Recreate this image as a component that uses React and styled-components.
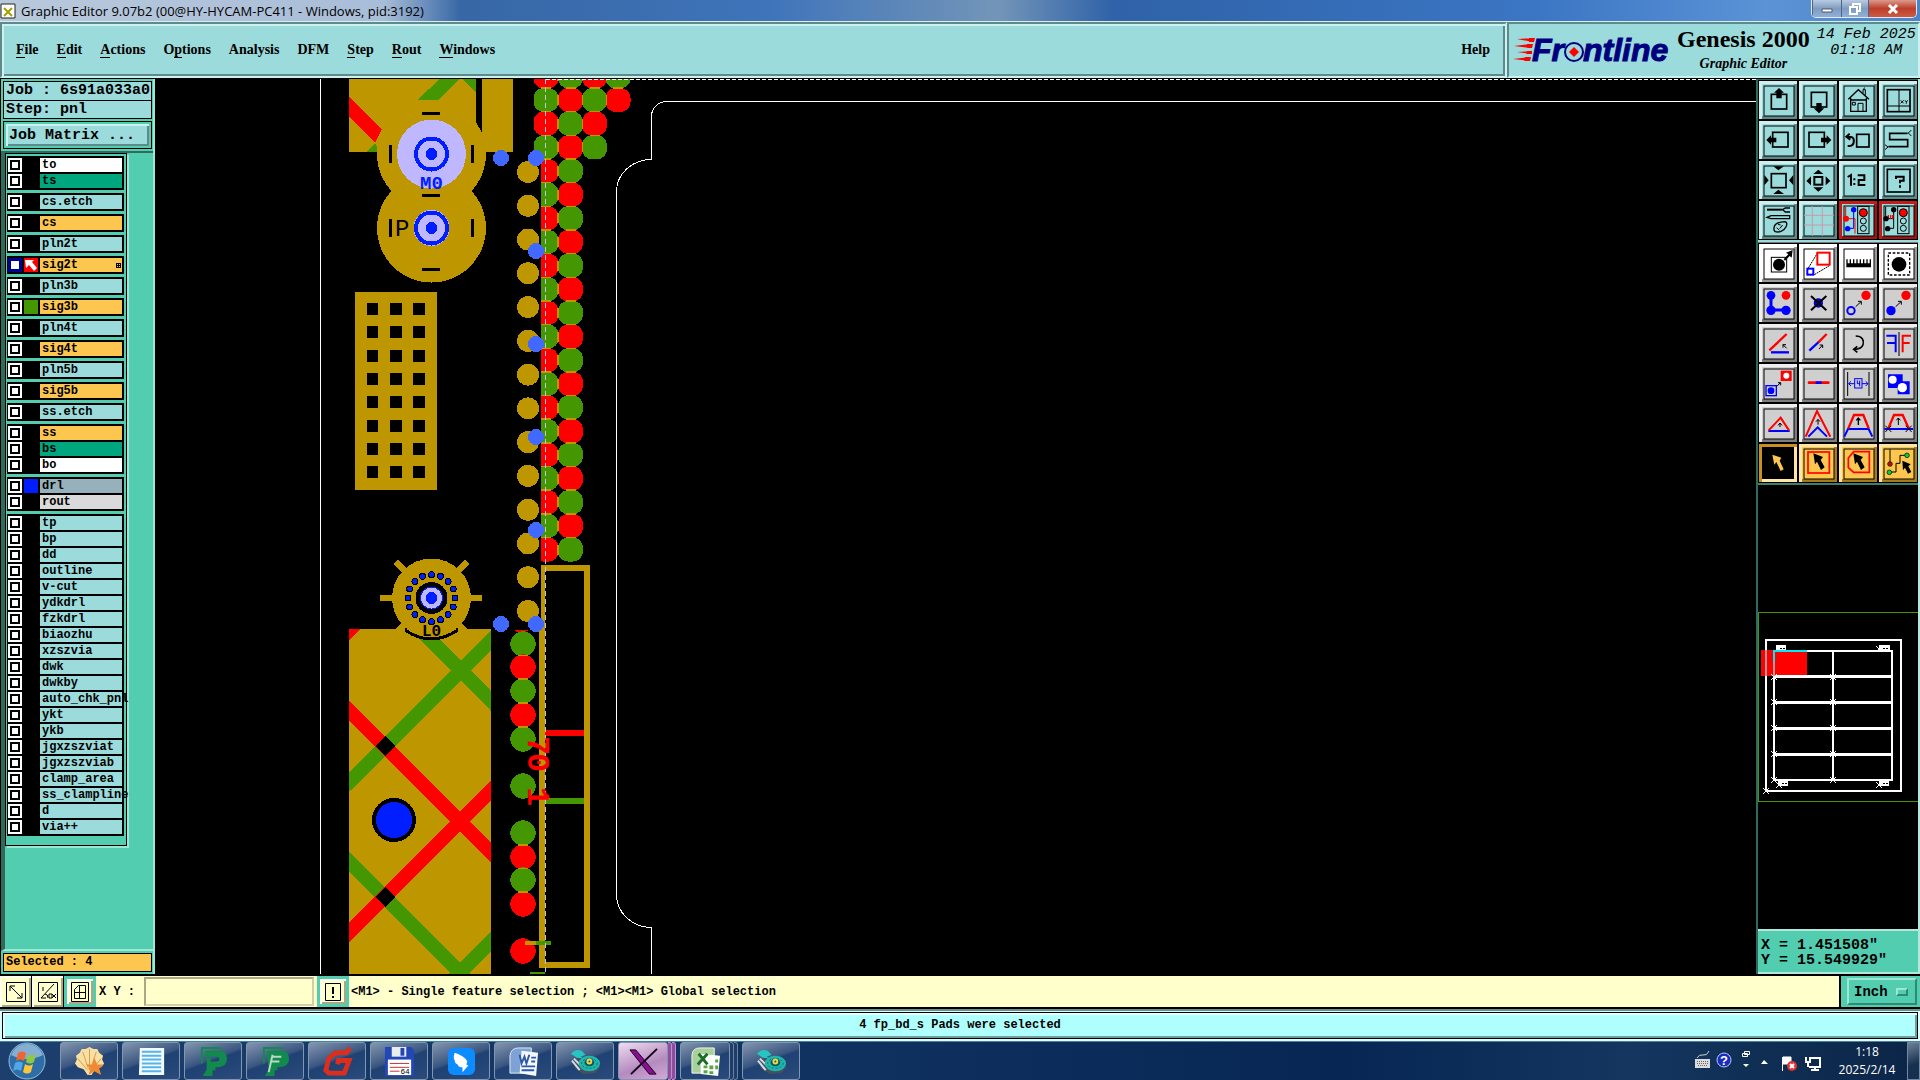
import React, { useState } from "react";
import styled, { createGlobalStyle } from "styled-components";

const GOLD = "#be9700";
const GREEN = "#449700";
const RED = "#ff0000";
const BLUE = "#001eff";
const PIN = "#4169ff";
const LILAC = "#bfb7ff";

const layerGroups = [
  [{ name: "to", color: "#ffffff" }, { name: "ts", color: "#00a77e" }],
  [{ name: "cs.etch" }],
  [{ name: "cs", color: "#fdc64f" }],
  [{ name: "pln2t" }],
  [{ name: "sig2t", color: "#fdc64f", swatch: RED, active: true }],
  [{ name: "pln3b" }],
  [{ name: "sig3b", color: "#fdc64f", swatch: GREEN }],
  [{ name: "pln4t" }],
  [{ name: "sig4t", color: "#fdc64f" }],
  [{ name: "pln5b" }],
  [{ name: "sig5b", color: "#fdc64f" }],
  [{ name: "ss.etch" }],
  [
    { name: "ss", color: "#fdc64f" },
    { name: "bs", color: "#00a77e" },
    { name: "bo", color: "#ffffff" },
  ],
  [
    { name: "drl", color: "#96b1bb", swatch: BLUE },
    { name: "rout", color: "#dadada" },
  ],
  [
    "tp",
    "bp",
    "dd",
    "outline",
    "v-cut",
    "ydkdrl",
    "fzkdrl",
    "biaozhu",
    "xzszvia",
    "dwk",
    "dwkby",
    "auto_chk_pnl",
    "ykt",
    "ykb",
    "jgxzszviat",
    "jgxzszviab",
    "clamp_area",
    "ss_clampline",
    "d",
    "via++",
  ].map((name) => ({ name })),
];

// before / underlined letter / after
const menus = [
  ["", "F", "ile"],
  ["", "E", "dit"],
  ["", "A", "ctions"],
  ["O", "p", "tions"],
  ["Analysis", "", ""],
  ["DFM", "", ""],
  ["", "S", "tep"],
  ["", "R", "out"],
  ["", "W", "indows"],
];

/* Tool icons, drawn on a 114 x 114 grid */

const viewTools = [
  {
    label: "Pan up",
    art: (
      <>
        <rect x="37" y="40" width="46" height="44" fill="none" stroke="#000" strokeWidth="5" />
        <path d="M60 21l15 14h-7v17H52V35h-7z" />
      </>
    ),
  },
  {
    label: "Pan down",
    art: (
      <>
        <rect x="37" y="34" width="46" height="44" fill="none" stroke="#000" strokeWidth="5" />
        <path d="M60 97l16-15h-8V66H52v16h-8z" />
      </>
    ),
  },
  {
    label: "Home",
    art: (
      <g fill="none" stroke="#000" strokeWidth="4">
        <path d="M28 55l30-29 32 29M35 51v40h47V51M34 57h49" />
        <path d="M57 91V67h15v24M40 64h9v8h-9zM72 36V26h7v17M73 24l5-4" strokeWidth="3" />
      </g>
    ),
  },
  {
    label: "Zoom at XY",
    art: (
      <>
        <rect x="25" y="26" width="68" height="66" fill="none" stroke="#000" strokeWidth="5" />
        <path d="M60 26v66M25 75h68" stroke="#000" strokeWidth="3" />
        <path d="M65 58l9 9m0-9l-9 9M78 58l4 5 4-5m-4 5v5" fill="none" stroke="#000" strokeWidth="3" />
      </>
    ),
  },
  {
    label: "Pan left",
    art: (
      <>
        <rect x="41" y="34" width="46" height="44" fill="none" stroke="#000" strokeWidth="5" />
        <path d="M22 57l14-14v7h16v14H36v7z" />
      </>
    ),
  },
  {
    label: "Pan right",
    art: (
      <>
        <rect x="30" y="34" width="46" height="44" fill="none" stroke="#000" strokeWidth="5" />
        <path d="M97 57L83 43v7H66v14h17v7z" />
      </>
    ),
  },
  {
    label: "Previous view",
    art: (
      <g fill="none" stroke="#000" strokeWidth="5">
        <rect x="53" y="40" width="37" height="38" />
        <path d="M26 48h10c12 0 12 26-4 27h-6M32 38l-10 9 12 9" strokeWidth="6" />
      </g>
    ),
  },
  {
    label: "Snake view",
    art: (
      <g fill="none" stroke="#000" strokeWidth="5">
        <path d="M86 37H32v19h54v21H28" />
        <path d="M97 27l-9 9 9 9M18 71l9 7-9 8" strokeWidth="3" />
      </g>
    ),
  },
  {
    label: "Zoom in",
    art: (
      <>
        <rect x="37" y="38" width="44" height="42" fill="none" stroke="#000" strokeWidth="5" />
        <path d="M43 16h32L58 28zM43 99h32L58 86zM16 42v31l13-15zM103 42v31L90 58z" />
      </>
    ),
  },
  {
    label: "Zoom out",
    art: (
      <>
        <rect x="46" y="48" width="24" height="23" fill="none" stroke="#000" strokeWidth="6" />
        <path d="M58 26l15 13H43zM58 92l15-13H43zM22 60l14-14v27zM94 60L80 46v27z" />
      </>
    ),
  },
  {
    label: "One to two",
    art: (
      <g fill="none" stroke="#000" strokeWidth="6">
        <path d="M26 48l10-6v32M46 52v6M46 66v6M56 43h20v14H59v15h20" />
      </g>
    ),
  },
  {
    label: "Query",
    art: (
      <>
        <rect x="25" y="25" width="68" height="68" fill="none" stroke="#000" strokeWidth="5" />
        <path d="M51 54v-7h23v12H63v8M63 73v7" fill="none" stroke="#000" strokeWidth="6" />
      </>
    ),
  },
  {
    label: "Options",
    art: (
      <g fill="none" stroke="#000" strokeWidth="4">
        <path d="M24 26h46" strokeWidth="6" />
        <path d="M93 21H79l-8 5 8 7h14M24 49l12-5h56v9H36z" />
        <path d="M45 82c0-14 12-19 32-20 9 0 7 12 3 17-5 12-22 16-31 13-3-2-5-6-4-10z" />
        <path d="M57 70l8 2M53 80l8 8M71 72l-9 11" strokeWidth="3" />
      </g>
    ),
  },
  {
    label: "Grid",
    art: (
      <path d="M40 15v90M70 15v90M15 43h90M15 72h90" stroke="#c99aa8" strokeWidth="3" fill="none" />
    ),
  },
  {
    label: "Affected layers",
    alert: true,
    art: (
      <>
        <rect x="56" y="16" width="34" height="82" fill="none" stroke="#000" strokeWidth="3" />
        <circle cx="73" cy="35" r="12" fill={RED} stroke="#000" strokeWidth="3" />
        <path d="M20 17v36h28v45" fill="none" stroke={RED} strokeWidth="3" />
        <path d="M44 26v56H26" fill="none" stroke="#0000ff" strokeWidth="3" />
        <circle cx="21" cy="53" r="9" fill={RED} />
        <circle cx="44" cy="26" r="8" fill="#0000ff" />
        <circle cx="26" cy="83" r="8" fill="#0000ff" />
        <circle cx="73" cy="60" r="9" fill="none" stroke="#000" strokeWidth="3" />
        <circle cx="73" cy="82" r="9" fill="none" stroke="#000" strokeWidth="3" />
      </>
    ),
  },
  {
    label: "Layer conflicts",
    alert: true,
    art: (
      <>
        <rect x="56" y="16" width="34" height="82" fill="none" stroke="#000" strokeWidth="3" />
        <circle cx="73" cy="35" r="12" fill={RED} stroke="#000" strokeWidth="3" />
        <path d="M20 17v36M44 26v56H26M20 53h24" fill="none" stroke="#000" strokeWidth="3" />
        <path d="M28 53V42M35 53V42M41 53V42" stroke={RED} strokeWidth="4" />
        <circle cx="21" cy="53" r="8" />
        <circle cx="44" cy="26" r="8" />
        <circle cx="26" cy="83" r="8" />
        <circle cx="73" cy="60" r="9" fill="none" stroke="#000" strokeWidth="3" />
        <circle cx="73" cy="82" r="9" fill="none" stroke="#000" strokeWidth="3" />
      </>
    ),
  },
];

const editTools = [
  {
    label: "Add feature",
    tone: "white",
    art: (
      <>
        <rect x="37" y="40" width="46" height="44" fill="none" stroke="#000" strokeWidth="3" />
        <circle cx="60" cy="62" r="18" />
        <path d="M74 46l14-15-7-5 20-8-3 23-6-5-14 14z" />
      </>
    ),
  },
  {
    label: "Resize",
    tone: "white",
    art: (
      <>
        <path d="M28 72l28-46M46 92l45-27" stroke="#000" strokeWidth="3" strokeDasharray="6 2" />
        <rect x="55" y="26" width="37" height="36" fill="#fff" stroke={RED} strokeWidth="6" />
        <rect x="25" y="74" width="18" height="18" fill="#fff" stroke="#0000ff" strokeWidth="6" />
      </>
    ),
  },
  {
    label: "Measure",
    tone: "white",
    art: (
      <path d="M22 46h4v12h6V46h4v12h6V46h4v12h6V46h4v12h6V46h4v12h6V46h4v12h6V46h4v12h6V46h4v24H22z" />
    ),
  },
  {
    label: "Select surround",
    tone: "white",
    art: (
      <>
        <rect x="28" y="27" width="64" height="66" fill="none" stroke="#000" strokeWidth="4" strokeDasharray="8 5" />
        <circle cx="60" cy="61" r="22" />
      </>
    ),
  },
  {
    label: "Connect pads",
    art: (
      <>
        <path d="M36 34v44h44" fill="none" stroke="#0000ff" strokeWidth="9" />
        <circle cx="36" cy="34" r="13" fill="#0000ff" />
        <circle cx="36" cy="79" r="14" fill="#0000ff" />
        <circle cx="81" cy="79" r="14" fill="#0000ff" />
        <circle cx="81" cy="34" r="13" fill={RED} />
      </>
    ),
  },
  {
    label: "Delete",
    art: (
      <>
        <circle cx="58" cy="57" r="14" fill="#0000c8" />
        <path d="M36 36l46 43M82 36L36 79" stroke="#000" strokeWidth="6" />
      </>
    ),
  },
  {
    label: "Copy",
    art: (
      <>
        <circle cx="36" cy="80" r="11" fill="none" stroke="#0000ff" strokeWidth="6" />
        <circle cx="81" cy="34" r="14" fill={RED} />
        <path d="M50 68l16-15M57 52h10v10" fill="none" stroke="#000" strokeWidth="3" />
      </>
    ),
  },
  {
    label: "Move",
    art: (
      <>
        <circle cx="36" cy="80" r="14" fill="#0000ff" />
        <circle cx="81" cy="34" r="14" fill={RED} />
        <path d="M50 68l16-15M57 52h10v10" fill="none" stroke="#000" strokeWidth="3" />
      </>
    ),
  },
  {
    label: "Rotate line",
    art: (
      <>
        <path d="M36 85h54" stroke="#0000ff" strokeWidth="7" />
        <path d="M31 79l52-49" stroke={RED} strokeWidth="7" />
        <path d="M83 73L72 62M72 71v-9h9" fill="none" stroke="#000" strokeWidth="3" />
      </>
    ),
  },
  {
    label: "Stretch line",
    art: (
      <>
        <path d="M31 80l28-26" stroke="#0000ff" strokeWidth="7" />
        <path d="M58 55l25-25" stroke={RED} strokeWidth="7" />
        <path d="M60 75l11-12M62 63h9v9" fill="none" stroke="#000" strokeWidth="3" />
      </>
    ),
  },
  {
    label: "Rotate",
    art: (
      <path d="M50 36c20 0 26 14 22 26-3 9-10 13-26 14M55 67l-11 9 11 9" fill="none" stroke="#000" strokeWidth="5" />
    ),
  },
  {
    label: "Mirror",
    art: (
      <>
        <path d="M22 35h28v50M24 57h26" fill="none" stroke="#0000ff" strokeWidth="6" />
        <path d="M60 24v72" stroke="#000" strokeWidth="3" />
        <path d="M96 35H71v50M71 57h21" fill="none" stroke={RED} strokeWidth="6" />
      </>
    ),
  },
  {
    label: "Replace symbol",
    art: (
      <>
        <rect x="21" y="65" width="31" height="30" fill="none" stroke="#0000ff" strokeWidth="4" />
        <circle cx="36" cy="80" r="10" fill="#0000ff" />
        <rect x="65" y="20" width="33" height="31" fill={RED} />
        <circle cx="82" cy="35" r="9" fill="#fff" />
        <path d="M54 67l10-11M57 56h8v8" fill="none" stroke="#000" strokeWidth="3" />
      </>
    ),
  },
  {
    label: "Join lines",
    art: (
      <>
        <path d="M30 56h58" stroke={RED} strokeWidth="8" strokeLinecap="round" />
        <path d="M50 56h18" stroke="#0000ff" strokeWidth="8" />
      </>
    ),
  },
  {
    label: "Spacing",
    art: (
      <>
        <path d="M26 24v72M90 24v72" stroke="#000" strokeWidth="3" />
        <path d="M29 59h58M36 52l-7 7 7 7M80 52l7 7-7 7" fill="none" stroke="#0000ff" strokeWidth="3" />
        <rect x="47" y="44" width="22" height="28" fill="#cfcfcf" stroke="#0000ff" strokeWidth="3" />
        <path d="M55 49v10h8M62 50v17" fill="none" stroke="#0000ff" strokeWidth="3" />
      </>
    ),
  },
  {
    label: "Merge",
    art: (
      <>
        <path d="M27 31h44v21h21v39H56V72H27z" fill="#0000ff" />
        <circle cx="41" cy="47" r="12" fill="#fff" />
        <circle cx="70" cy="71" r="14" fill="#fff" />
      </>
    ),
  },
  {
    label: "Raise corner",
    art: (
      <>
        <path d="M28 81h64" stroke="#0000ff" strokeWidth="6" />
        <path d="M29 79l36-38 25 38" fill="none" stroke={RED} strokeWidth="6" />
        <path d="M63 69V58M57 64l6-7 6 7" fill="none" stroke="#000" strokeWidth="3" />
      </>
    ),
  },
  {
    label: "Raise peak",
    art: (
      <>
        <path d="M20 98l34-77 40 77" fill="none" stroke={RED} strokeWidth="6" />
        <path d="M28 98l28-28 28 28" fill="none" stroke="#0000ff" strokeWidth="6" />
        <path d="M57 62V47M51 53l6-7 6 7" fill="none" stroke="#000" strokeWidth="3" />
      </>
    ),
  },
  {
    label: "Raise segment",
    art: (
      <>
        <path d="M16 98l11-23h62l11 23" fill="none" stroke="#0000ff" strokeWidth="6" />
        <path d="M28 73l17-40h28l16 40" fill="none" stroke={RED} strokeWidth="7" />
        <path d="M58 63V42M52 49l6-7 6 7" fill="none" stroke="#000" strokeWidth="4" />
      </>
    ),
  },
  {
    label: "Move segment",
    art: (
      <>
        <path d="M16 75h86" stroke="#0000ff" strokeWidth="6" />
        <path d="M28 73l17-40h26l18 40" fill="none" stroke={RED} strokeWidth="7" />
        <path d="M58 63V42M52 49l6-7 6 7M19 65l18 19m0-19L19 84M80 65l18 19m0-19L80 84" fill="none" stroke="#000" strokeWidth="3" />
      </>
    ),
  },
  {
    label: "Select",
    tone: "pressed",
    art: <path d="M40 32l27 9-5 9 12 26-9 5-13-27-6 8z" fill="#fdc64f" />,
  },
  {
    label: "Select in frame",
    tone: "orange",
    art: (
      <>
        <rect x="27" y="24" width="64" height="63" fill="none" stroke={RED} strokeWidth="5" />
        <path d="M43 28l29 11-7 9 12 22-11 8-12-25-6 8z" />
      </>
    ),
  },
  {
    label: "Select in polygon",
    tone: "orange",
    art: (
      <>
        <path d="M44 23h47v62H44L28 71V42z" fill="none" stroke={RED} strokeWidth="5" />
        <path d="M43 28l29 11-7 9 12 22-11 8-12-25-6 8z" />
      </>
    ),
  },
  {
    label: "Select net",
    tone: "orange",
    art: (
      <>
        <path d="M33 16v40M33 84h18V58h12V34h18" fill="none" stroke="#000" strokeWidth="3" />
        <circle cx="33" cy="60" r="7" fill="#c41200" stroke="#000" strokeWidth="2" />
        <circle cx="31" cy="85" r="7" fill="#00d42a" stroke="#000" strokeWidth="2" />
        <circle cx="84" cy="34" r="7" fill="#00d42a" stroke="#000" strokeWidth="2" />
        <path d="M70 50l25 11-7 6 9 17-10 5-9-18-6 8z" />
      </>
    ),
  },
];

const ToolGlyph = ({ art, frameless }) => (
  <svg width="38" height="38" viewBox="0 0 114 114" aria-hidden="true">
    {!frameless && (
      <rect x="15" y="15" width="90" height="90" fill="none" stroke="#000" strokeWidth="3" />
    )}
    {art}
  </svg>
);

/* Board artwork */

const ballPitch = 23.66;
const ballColumns = [546, 570.5, 594.5, 618];

const balls = [];
for (let row = -1; row < 20; row++) {
  const columns = row < 1 ? 4 : row < 3 ? 3 : 2;
  for (let col = 0; col < columns; col++) {
    balls.push({
      x: ballColumns[col],
      y: 100 + row * ballPitch,
      row,
      col,
      last: col === columns - 1,
      fill: (row + col + 2) % 2 === 0 ? GREEN : RED,
    });
  }
}

const lowerBalls = [
  [644, GREEN],
  [667, RED],
  [691, GREEN],
  [715, RED],
  [739, GREEN],
  [786, GREEN],
  [833, GREEN],
  [857, RED],
  [880, GREEN],
  [904, RED],
  [951, RED],
];

const goldPads = Array.from({ length: 14 }, (_, i) => 172 + i * 33.77);
const holeRows = Array.from({ length: 8 }, (_, i) => 303 + i * 23.3);
const pins = [
  [501, 158],
  [536, 158],
  [536, 251],
  [536, 344],
  [536, 437],
  [536, 530],
  [536, 624],
  [501, 624],
];
const viaRing = Array.from({ length: 16 }, (_, i) => (i * Math.PI) / 8);

const Board = () => (
  <svg width="100%" height="100%" aria-label="Board artwork">
    <defs>
      <clipPath id="padBlock">
        <rect x="349" y="629" width="142" height="345" />
      </clipPath>
      <clipPath id="ballStrip">
        <path d="M530 79h120v490H541V159h-11z" />
      </clipPath>
    </defs>
    <g transform="translate(-155 -79)" shapeRendering="crispEdges">
      <path d="M320.5 79V974" stroke="#fff" />

      {/* top blocks */}
      <path d="M349 79h127v73H349zM482 79h31v73h-31z" fill={GOLD} />
      <path d="M349 97l33 32-7 14-26-26z" fill={RED} />
      <path d="M440 79h19l-21 21h-21zM463 79h13v14zM367 152l8-9 4 9z" fill={GREEN} />
      <circle cx="431.5" cy="154" r="54.5" fill={GOLD} />
      <circle cx="431.5" cy="228" r="54.5" fill={GOLD} />
      <circle cx="431.5" cy="154" r="34.5" fill={LILAC} />
      <circle cx="431.5" cy="154" r="15.5" fill="none" stroke={BLUE} strokeWidth="4" />
      <circle cx="431.5" cy="154" r="6" fill={BLUE} />
      <circle cx="431.5" cy="228" r="18" fill={LILAC} />
      <circle cx="431.5" cy="228" r="15.5" fill="none" stroke={BLUE} strokeWidth="4" />
      <circle cx="431.5" cy="228" r="6" fill={BLUE} />
      <path
        d="M422 113.5h18M422 195.5h18M422 269.5h18M390.5 145v18M472.5 145v18M390.5 219v18M472.5 219v18"
        stroke="#000"
        strokeWidth="3"
      />

      {/* hole grid */}
      <rect x="355" y="292" width="82" height="198" fill={GOLD} />
      {holeRows.map((y) => (
        <path key={y} d={`M367 ${y}h11v12h-11zM390 ${y}h12v12h-12zM413 ${y}h12v12h-12z`} />
      ))}

      {/* pad block with traces */}
      <rect x="349" y="629" width="142" height="345" fill={GOLD} />
      <g clipPath="url(#padBlock)">
        <path d="M349 772L491 630v21L349 792zM410 629h20l61 62v20zM349 851l122 123h-20L349 871zM491 931v20l-23 23h-20z" fill={GREEN} />
        <path d="M349 629h12l-12 11zM349 701l142 141v20L349 721zM349 922l142-142v20L349 942z" fill={RED} />
        <path d="M385 736l10 10-10 10-10-10zM385 887l10 10-10 10-10-10z" />
      </g>
      <circle cx="394" cy="820" r="22" />
      <circle cx="394" cy="820" r="18" fill={BLUE} />

      {/* wheel target */}
      <path d="M380 598h102M396 562l71 71M467 562l-71 71" stroke={GOLD} strokeWidth="6" />
      <circle cx="431.5" cy="598" r="39.5" fill={GOLD} />
      <circle cx="431.5" cy="598" r="16" />
      <circle cx="431.5" cy="598" r="11" fill={LILAC} stroke={BLUE} />
      <circle cx="431.5" cy="598" r="6" fill={BLUE} />
      {viaRing.map((a) => (
        <circle
          key={a}
          cx={431.5 + 23.5 * Math.cos(a)}
          cy={598 + 23.5 * Math.sin(a)}
          r="3"
          fill={BLUE}
          stroke="#000"
        />
      ))}
      <path d="M405 630q26 18 53 0" fill="none" stroke="#000" strokeWidth="3" />

      {/* pads and ball columns */}
      {goldPads.map((y) => (
        <circle key={y} cx="528" cy={y} r="11" fill={GOLD} />
      ))}
      <g clipPath="url(#ballStrip)">
        {balls.map((b) => (
          <rect
            key={`${b.row}-${b.col}`}
            x={b.x - 12.5}
            y={b.y - 12}
            width="25"
            height="24"
            rx="10"
            fill={b.fill}
          />
        ))}
        {balls.map((b) => (
          <path
            key={`${b.row}-${b.col}`}
            d={
              `M${b.x - 5} ${b.y - 12}h10` +
              (b.last ? "" : `M${b.x + 12} ${b.y - 5}v10`)
            }
            stroke={GOLD}
            strokeWidth="1.5"
          />
        ))}
      </g>
      <path d="M514 630h15l-4 2h-9z" fill={RED} />
      {lowerBalls.map(([y, fill]) => (
        <circle key={y} cx="523" cy={y} r="12.7" fill={fill} />
      ))}
      <path
        d="M518 655.5h10M518 679h10M518 703h10M518 727h10M518 845h10M518 868.5h10M518 892h10"
        stroke={GOLD}
        strokeWidth="1.5"
      />

      {/* coupon frame */}
      <path d="M541 565h49v403h-51V628h2zM545 571v391h39V571z" fill={GOLD} fillRule="evenodd" />
      <rect x="545" y="730" width="39" height="6" fill={RED} />
      <rect x="545" y="798" width="39" height="6" fill={GREEN} />
      <path d="M525 941h26v4h-26zM530 972h15v2h-15z" fill={GREEN} />
      <path d="M525 941h11v4h-11z" fill={GOLD} />

      {pins.map(([x, y]) => (
        <circle key={`${x}-${y}`} cx={x} cy={y} r="8" fill={PIN} />
      ))}

      <path d="M545.5 79V974" stroke="#c4c4e8" strokeDasharray="5 3" />
      <path d="M546 79.5H4000" stroke="#fff" strokeDasharray="4 2" />
      <path
        d="M4000 101.5H667A15 15 0 0 0 651.5 116V159.5A35 32 0 0 0 616.5 190V894A35 33 0 0 0 651.5 927.5V974"
        fill="none"
        stroke="#fff"
      />
    </g>
    <BoardText transform="translate(-155 -79)">
      <text x="420" y="189" fontSize="19" fill={BLUE}>M0</text>
      <text x="395" y="236" fontSize="24" fontWeight="normal">P</text>
      <text x="422" y="636" fontSize="16">L0</text>
      <g fill={RED} fontSize="32">
        <text transform="translate(528 736) rotate(90)">7</text>
        <text transform="translate(528 753) rotate(90)">0</text>
        <text transform="translate(528 787) rotate(90)">1</text>
      </g>
    </BoardText>
  </svg>
);

const cross = (x, y) => `M${x - 3} ${y - 3}l6 6M${x + 3} ${y - 3}l-6 6`;

const Overview = () => (
  <svg width="160" height="440" aria-label="Panel overview">
    <g transform="translate(-1758 -487)" fill="none" stroke="#fff" shapeRendering="crispEdges">
      <path d="M1918 614.5H1758.5V803.5H1918" stroke={GREEN} />
      <path d="M1766 642h135v151h-135z" strokeWidth="2" />
      <path d="M1761 652h46v26h-46z" fill={RED} stroke="none" />
      <path d="M1766 652v26M1774 652v26" stroke="#b09a9a" strokeWidth="2" />
      <path d="M1774 678v104h118V653h-85M1833 653v129" strokeWidth="2" />
      <path d="M1775 678.5h117M1775 704.5h117M1775 730.5h117M1775 756.5h117" strokeWidth="3" />
      <path d="M1774 664v-11h33" stroke="#00eaff" strokeWidth="2" />
      <path d="M1776 649h10M1879 649h11M1778 785h10M1879 785h10" strokeWidth="5" />
      <path d="M1780 650h5M1883 650h5M1782 785h6M1883 785h6" stroke="#000" strokeDasharray="2 1" />
      <path
        d={
          [679, 704, 730, 756, 782].map((y) => cross(1774, y) + cross(1833, y)).join("") +
          cross(1766, 793) +
          cross(1779, 787) +
          cross(1879, 787) +
          cross(1879, 651)
        }
      />
    </g>
  </svg>
);

const FrontlineLogo = () => (
  <svg width="162" height="46" viewBox="0 0 162 46" aria-label="Frontline">
    <path
      transform="translate(-1 9)"
      d="M5 3l16-1v4zM2 10l17-2v4zM5 16l15-1v3zM1 23l17-2v4zM17 2h6l-1 4h-5zM15 8h6l-1 4h-5zM15 15h5l-1 3h-5zM13 21h6l-1 4h-6z"
      fill={RED}
    />
    <LogoText x="19" y="34">
      Fr
    </LogoText>
    <circle cx="61" cy="25" r="9" fill="none" stroke="#00007f" strokeWidth="2" />
    <path d="M61 20l5 5-5 5-5-5z" fill={RED} />
    <LogoText x="70" y="34">
      ntline
    </LogoText>
  </svg>
);

/* Taskbar icons, 32 x 32 */

const Genesis = (
  <>
    <path d="M2 15l7-3 20 3 2 7-5 6-12 1-9-6z" fill="#46505f" />
    <path d="M2 15l8 10M4 13l8 8" stroke="#d5dde6" strokeWidth="2" />
    <ellipse cx="20" cy="18" rx="11" ry="8" fill="#1fb5ac" />
    <ellipse cx="20" cy="18" rx="8" ry="5" fill="none" stroke="#0b6e70" strokeDasharray="2 2" />
    <ellipse cx="20" cy="17" rx="5" ry="4" fill="#0b5a5c" />
    <circle cx="20" cy="16" r="3" fill="#f4d747" />
    <circle cx="20" cy="16" r="1" fill="#0b5a5c" />
    <path d="M1 8q5-6 11-3l4 4-5 2 3 2-7-1z" fill="#27c4c4" />
  </>
);

const tasks = [
  {
    label: "Shell",
    art: (
      <>
        <path d="M16 1l4 2 4 0 2 4 4 3-1 4 2 4-3 4-6 2-4 6H14l-4-6-6-2-3-4 2-4-1-4 4-3 2-4h4z" fill="#f9dfa4" />
        <path d="M16 3v22M9 6l6 18M23 6l-6 18M4 13l10 12M28 13L18 25" stroke="#d99b45" />
        <path d="M21 12l3 7 7 0-5 4 2 7-7-4-6 4 2-7-5-4h7z" fill="#ef8a33" />
      </>
    ),
  },
  {
    label: "Notes",
    art: (
      <>
        <path d="M4 2h25v28H3z" fill="#f2fbff" />
        <path d="M6 6h20M6 10h20M6 14h20M6 18h20M6 22h20M6 26h20" stroke="#58b4e8" strokeWidth="2" />
      </>
    ),
  },
  {
    label: "Planner",
    art: (
      <>
        <path d="M7 5h16q7 1 7 8 0 8-9 9h-3v3h-3v6H5l4-7V12h4v4h6q3 0 3-3 0-2-3-2H7z" fill="#128a4d" />
        <path d="M4 18V2h20" fill="none" stroke="#128a4d" strokeWidth="2" />
      </>
    ),
  },
  {
    label: "Planner 2",
    art: (
      <>
        <path d="M7 5h16q7 1 7 8 0 8-9 9h-3v3h-3v6H5l4-7z" fill="#128a4d" />
        <path d="M13 11h9M12 16h8M13 9l-4 18" stroke="#b9d8c5" strokeWidth="2" fill="none" />
        <path d="M4 18V2h20" fill="none" stroke="#128a4d" strokeWidth="2" />
      </>
    ),
  },
  {
    label: "G tool",
    art: (
      <path d="M29 2l-4 5H14L7 13 4 25l3 3h16l5-13H17l-1 4" fill="none" stroke="#dc2e1c" strokeWidth="5" />
    ),
  },
  {
    label: "Disk 64",
    art: (
      <>
        <path d="M1 1h27l3 3v27H1z" fill="#2447b8" />
        <path d="M8 1h15v10H8z" fill="#e9edf2" />
        <path d="M17 2h4v8h-4z" fill="#2447b8" />
        <path d="M4 14h24v16H4z" fill="#fff" />
        <path d="M6 18h20M6 22h20M6 26h10" stroke="#c22c35" />
        <text x="17" y="29" fontSize="8" fontFamily="Liberation Mono, monospace">64</text>
      </>
    ),
  },
  {
    label: "Messenger",
    art: (
      <>
        <rect x="2" y="2" width="28" height="28" rx="6" fill="#0d8cff" />
        <path d="M9 7q10 3 13 9l-1 3 2 1-6 7v-5q-4 0-5-3-3-1-3-4-2-3 0-8z" fill="#fff" />
      </>
    ),
  },
  {
    label: "Word",
    art: (
      <>
        <path d="M2 28V10q1-8 9-8h13v26z" fill="#7fa2d6" stroke="#dfe9f6" />
        <path d="M14 5l17 2-2 24-17-3z" fill="#f5f8fd" />
        <path d="M24 12h5M24 16h4M14 21h14M14 25h13" stroke="#2c5aa4" strokeWidth="2" />
        <path d="M12 9l2 9 3-7 2 7 3-9" fill="none" stroke="#2c5aa4" strokeWidth="2" />
      </>
    ),
  },
  { label: "Genesis", art: Genesis },
  {
    label: "Xming",
    current: true,
    stack: true,
    art: (
      <>
        <path d="M2 4h6l21 25h-7z" fill="#8a0f93" stroke="#120018" />
        <path d="M30 3L3 29" stroke="#120018" strokeWidth="2" />
      </>
    ),
  },
  {
    label: "Excel",
    stack: true,
    art: (
      <>
        <path d="M2 28V9q1-7 8-7h15v26z" fill="#a9d09a" stroke="#eef8ea" />
        <path d="M11 8l20 2-2 21-18-2z" fill="#fbfefa" />
        <path d="M14 20h4v3h-4zM20 20h4v4h-4zM26 20h3v4h-3zM14 25h4v3h-4zM20 26h4v3h-4zM26 14h3v3h-3z" fill="#59a445" />
        <path d="M9 8l9 11M18 8L8 19" stroke="#1c6b26" strokeWidth="3" />
      </>
    ),
  },
  { label: "Genesis 2", art: Genesis },
];

const App = () => {
  const [active, setActive] = useState("sig2t");
  const [unit, setUnit] = useState("Inch");

  return (
    <>
      <GlobalStyle />
      <Page>
        <TitleBar>
          <AppIcon viewBox="0 0 16 16" aria-hidden="true">
            <path d="M1 1h14v14H1z" fill="#fff" stroke="#222" />
            <path d="M4 5l8 8M12 5l-8 8" stroke="#a8a000" strokeWidth="2" />
          </AppIcon>
          <Title>Graphic Editor 9.07b2 (00@HY-HYCAM-PC411 - Windows, pid:3192)</Title>
          <WindowButtons>
            <WindowButton $width={29} aria-label="Minimize">
              <svg width="14" height="14">
                <path d="M2 7h10v3H2z" fill="#fff" stroke="#556" />
              </svg>
            </WindowButton>
            <WindowButton $width={27} aria-label="Restore">
              <svg width="14" height="14" fill="none" stroke="#fff" strokeWidth="2">
                <path d="M5 4V2h7v7h-2M2 5h7v7H2z" />
              </svg>
            </WindowButton>
            <WindowButton $width={48} $close aria-label="Close">
              <svg width="14" height="14" stroke="#fff" strokeWidth="3">
                <path d="M3 3l8 8M11 3l-8 8" />
              </svg>
            </WindowButton>
          </WindowButtons>
        </TitleBar>

        <Header>
          <MenuBar>
            {menus.map(([before, key, after]) => (
              <MenuItem key={before + key + after}>
                {before}
                {key && <Mnemonic>{key}</Mnemonic>}
                {after}
              </MenuItem>
            ))}
            <HelpItem>Help</HelpItem>
          </MenuBar>
          <Brand>
            <FrontlineLogo />
            <Product>
              <h1>Genesis 2000</h1>
              <p>Graphic Editor</p>
            </Product>
            <Clock>
              <span>14 Feb 2025</span>
              <span>01:18 AM</span>
            </Clock>
          </Brand>
        </Header>

        <Workspace>
          <Sidebar>
            <JobInfo>
              <JobLine>Job : 6s91a033a0</JobLine>
              <JobLine>Step: pnl</JobLine>
            </JobInfo>
            <MatrixFrame>
              <MatrixButton>Job Matrix ...</MatrixButton>
            </MatrixFrame>
            <LayerArea>
              <LayerList>
                {layerGroups.map((group) => (
                  <LayerGroup key={group[0].name}>
                    {group.map((layer) => (
                      <LayerRow key={layer.name}>
                        <LayerCheck
                          type="checkbox"
                          id={`layer-${layer.name}`}
                          checked={layer.name === active}
                          onChange={() => setActive(layer.name)}
                        />
                        <Swatch $color={layer.swatch}>
                          {layer.active && (
                            <svg width="14" height="14" aria-hidden="true">
                              <path d="M1 2h9L8 4l5 6-3 3-5-6-3 3z" fill="#fff" />
                            </svg>
                          )}
                        </Swatch>
                        <LayerName htmlFor={`layer-${layer.name}`} $color={layer.color}>
                          {layer.name}
                          {layer.active && (
                            <svg width="5" height="5" aria-hidden="true">
                              <path d="M0 0h5v5H0z" />
                              <path d="M1 1h1v1H1zM3 1h1v1H3zM1 3h1v1H1zM3 3h1v1H3z" fill="#fdc64f" />
                            </svg>
                          )}
                        </LayerName>
                      </LayerRow>
                    ))}
                  </LayerGroup>
                ))}
              </LayerList>
            </LayerArea>
            <SelectedCount>Selected : 4</SelectedCount>
          </Sidebar>

          <Canvas>
            <Board />
          </Canvas>

          <RightPanel>
            <ToolGrid>
              {viewTools.map((tool) => (
                <ToolButton key={tool.label} aria-label={tool.label} $tone={tool.alert ? "alert" : "teal"}>
                  <ToolGlyph art={tool.art} />
                </ToolButton>
              ))}
            </ToolGrid>
            <ToolGrid $gray>
              {editTools.map((tool) => (
                <ToolButton key={tool.label} aria-label={tool.label} $tone={tool.tone || "gray"}>
                  <ToolGlyph art={tool.art} frameless={tool.tone === "pressed"} />
                </ToolButton>
              ))}
            </ToolGrid>
            <OverviewBox>
              <Overview />
            </OverviewBox>
            <Coordinates>
              <span>X = 1.451508"</span>
              <span>Y = 15.549929"</span>
            </Coordinates>
          </RightPanel>
        </Workspace>

        <StatusBar>
          <SnapButton aria-label="Snap">
            <svg width="20" height="20" fill="none" stroke="#000">
              <path d="M.5.5h19v19H.5zM4 4l12 12M4 9V4h5M16 11v5h-5" />
            </svg>
          </SnapButton>
          <SnapButton aria-label="Angle">
            <svg width="20" height="20" fill="none" stroke="#000">
              <path d="M.5.5h19v19H.5zM16 2L3 16h5M5 5v4M10 16q0-4-3-4M11 12h3v4h-3zM14 12l4 4M18 12l-4 4" />
            </svg>
          </SnapButton>
          <SnapButton $framed aria-label="Grid snap">
            <svg width="18" height="20" fill="none" stroke="#000">
              <path d="M.5.5h17v19H.5zM3.5 7.5l4-4h7v13h-11zM8.5 3v14M3 10.5h12" />
            </svg>
          </SnapButton>
          <CoordLabel htmlFor="xy">X Y :</CoordLabel>
          <CoordInput id="xy" type="text" />
          <SnapButton $framed aria-label="Apply">
            <svg width="16" height="18" fill="none" stroke="#000">
              <path d="M.5.5h15v17H.5z" />
              <path d="M8 4v7M8 13v2" strokeWidth="2" />
            </svg>
          </SnapButton>
          <Hint>&lt;M1&gt; - Single feature selection ; &lt;M1&gt;&lt;M1&gt; Global selection</Hint>
          <UnitBox>
            <UnitField>
              <select aria-label="Units" value={unit} onChange={(e) => setUnit(e.target.value)}>
                <option>Inch</option>
                <option>MM</option>
              </select>
              <UnitKnob />
            </UnitField>
          </UnitBox>
        </StatusBar>

        <MessageBar>
          <p>4 fp_bd_s Pads were selected</p>
        </MessageBar>

        <Taskbar>
          <StartButton aria-label="Start">
            <svg width="40" height="38" viewBox="0 0 40 38">
              <circle cx="20" cy="19" r="18" fill="#2f6da6" stroke="#8fc0e0" />
              <path d="M4 13a17 17 0 0 1 32 0q-16 8-32 0z" fill="#a9cbe2" opacity=".7" />
              <path d="M11 11q4-3 8 0l-2 8q-4-3-8 0z" fill="#ee6530" />
              <path d="M21 12q4 3 8 0l-2 8q-4 3-8 0z" fill="#8fc93f" />
              <path d="M8 21q4-3 8 0l-2 8q-4-3-8 0z" fill="#4fa8e8" />
              <path d="M18 22q4 3 8 0l-2 8q-4 3-8 0z" fill="#fbc63a" />
            </svg>
          </StartButton>
          <TaskList>
            {tasks.map((task) => (
              <TaskSlot key={task.label}>
                <TaskButton aria-label={task.label} $current={task.current}>
                  <svg width="31" height="31" viewBox="0 0 32 32">
                    {task.art}
                  </svg>
                </TaskButton>
                {task.stack && <StackEdge $current={task.current} />}
                {task.stack && <StackEdge $current={task.current} />}
              </TaskSlot>
            ))}
          </TaskList>
          <Tray>
            <svg width="130" height="24" viewBox="0 0 130 24" aria-label="Notification icons">
              <path d="M4 9q2-4 6-3t6-4" fill="none" stroke="#c9ced6" />
              <path d="M2 10h15v9H2z" fill="#dcdcdc" />
              <path d="M4 12.5h11M4 14.5h11M5 16.5h9" stroke="#666" strokeDasharray="1 1" />
              <circle cx="31" cy="11" r="7" fill="#1a2bc0" stroke="#b9c8f0" />
              <text x="27" y="16" fontSize="13" fontWeight="bold" fontFamily="Liberation Sans, sans-serif" fill="#fff">
                ?
              </text>
              <path d="M51.5 2.5h5v3h-5zM49.5 4.5h5v3h-5z" fill="none" stroke="#fff" />
              <path d="M50 15h6l-3 3zM68 15h7l-4-4z" fill="#fff" />
              <path d="M89.5 8v14M90 8h8v7h-8z" fill="#fff" stroke="#fff" />
              <circle cx="99" cy="17" r="5" fill="#dc3530" />
              <path d="M97 15l4 4M101 15l-4 4" stroke="#fff" strokeWidth="2" />
              <path d="M116 9h11v9h-11M118 21h8M122 18v3M113 8v5h4V8M115 13v5" fill="none" stroke="#fff" strokeWidth="2" />
            </svg>
            <TrayClock>
              <span>1:18</span>
              <span>2025/2/14</span>
            </TrayClock>
          </Tray>
          <ShowDesktop aria-label="Show desktop" />
        </Taskbar>
      </Page>
    </>
  );
};

const MONO = `"Liberation Mono", "Courier New", monospace`;
const SERIF = `"Liberation Serif", "Times New Roman", serif`;
const SANS = `"Open Sans", "Noto Sans", sans-serif`;

const GlobalStyle = createGlobalStyle`
  * {
    box-sizing: border-box;
  }
  body {
    margin: 0;
    background: #000;
    color: #000;
    font-family: ${MONO};
    font-size: 12px;
  }
  h1, p {
    margin: 0;
  }
  button {
    border: 0;
    padding: 0;
    color: inherit;
    font: inherit;
  }
  svg {
    display: block;
    flex: none;
  }
`;

const Page = styled.div`
  min-height: 100vh;
  display: flex;
  flex-direction: column;
`;

const TitleBar = styled.header`
  height: 22px;
  display: flex;
  align-items: center;
  background: linear-gradient(
    90deg,
    #b9c9dc 0,
    #a8bdd8 20%,
    #3767a5 24%,
    #3f74ba 40%,
    #7395b8 52%,
    #2f62a8 58%,
    #3b76c4 80%,
    #5b93d6 92%,
    #4b84c8 100%
  );
  border-bottom: 1px solid #d6efef;
`;

const AppIcon = styled.svg`
  width: 16px;
  height: 16px;
  margin-right: 5px;
`;

const Title = styled.span`
  flex: 1;
  font-family: ${SANS};
  font-size: 13px;
  line-height: 20px;
`;

const WindowButtons = styled.div`
  align-self: flex-start;
  display: flex;
  margin-right: 3px;
  border: 1px solid #dfeaf6;
  border-top: 0;
  border-radius: 0 0 5px 5px;
  overflow: hidden;
`;

const WindowButton = styled.button`
  display: flex;
  align-items: center;
  justify-content: center;
  width: ${({ $width }) => $width}px;
  height: 17px;
  border-left: 1px solid #4c6485;
  background: ${({ $close }) =>
    $close
      ? "linear-gradient(#dc9a8c, #bd3f2b 50%, #cf5a41)"
      : "linear-gradient(#b9cce2, #7f9cc0 50%, #8fb0d6)"};
`;

const Header = styled.div`
  display: flex;
  height: 57px;
  background: #9bdbdb;
  border-bottom: 1px solid #000;
`;

const MenuBar = styled.nav`
  flex: 1;
  display: flex;
  align-items: center;
  gap: 18px;
  padding: 0 15px 0 14px;
  border-top: 2px solid #5f8a8c;
  border-left: 2px solid #5f8a8c;
  border-bottom: 2px solid #cdf1f1;
  border-right: 2px solid #cdf1f1;
  box-shadow: inset 2px 2px #cdf1f1, inset -2px -2px #5f8a8c;
`;

const MenuItem = styled.button`
  background: none;
  font-family: ${SERIF};
  font-size: 14px;
  font-weight: bold;
`;

const HelpItem = styled(MenuItem)`
  margin-left: auto;
`;

const Mnemonic = styled.span`
  border-bottom: 1px solid #000;
`;

const Brand = styled.div`
  display: flex;
  align-items: center;
  width: 413px;
  padding: 0 2px 0 4px;
  border-top: 2px solid #5f8a8c;
  border-left: 2px solid #5f8a8c;
  border-bottom: 2px solid #cdf1f1;
  border-right: 2px solid #cdf1f1;
`;

const LogoText = styled.text`
  font: italic bold 32px "Liberation Sans", Arial, sans-serif;
  fill: #00007f;
  stroke: #00007f;
`;

const Product = styled.div`
  display: flex;
  flex-direction: column;
  align-items: center;
  padding-left: 2px;
  font-family: ${SERIF};
  font-weight: bold;
  h1 {
    font-size: 24px;
    line-height: 28px;
  }
  p {
    font-size: 14px;
    font-style: italic;
    line-height: 22px;
  }
`;

const Clock = styled.div`
  align-self: flex-start;
  display: flex;
  flex-direction: column;
  align-items: center;
  padding: 3px 0 0 7px;
  font-size: 15px;
  font-style: italic;
  line-height: 16px;
  white-space: nowrap;
`;

const Workspace = styled.main`
  flex: 1;
  display: flex;
  min-height: 895px;
`;

const Sidebar = styled.aside`
  width: 155px;
  display: flex;
  flex-direction: column;
  background: #53cdb0;
  border-left: 1px solid #000;
  border-right: 2px solid #9fe6d4;
`;

const JobInfo = styled.div`
  margin: 2px 1px 2px 2px;
  border: 1px solid #000;
`;

const JobLine = styled.p`
  height: 18px;
  padding-left: 2px;
  background: #9bdbdb;
  font-size: 15px;
  font-weight: bold;
  line-height: 18px;
  white-space: nowrap;
  & + & {
    border-top: 1px solid #000;
  }
`;

const MatrixFrame = styled.div`
  margin: 0 1px 2px 2px;
  padding: 2px;
  border: 1px solid #000;
`;

const MatrixButton = styled.button`
  width: 100%;
  height: 22px;
  padding-left: 3px;
  background: #9bdbdb;
  box-shadow: inset 2px 2px #cdf1f1, inset -2px -2px #5f8a8c;
  font-size: 15px;
  font-weight: bold;
  text-align: left;
`;

const LayerArea = styled.div`
  flex: 1;
  border-top: 2px solid #2f6b5c;
  border-left: 4px solid #2f6b5c;
  border-bottom: 2px solid #9fe6d4;
`;

const LayerList = styled.div`
  width: 122px;
  display: flex;
  flex-direction: column;
  gap: 3px;
  padding: 2px 2px 9px 1px;
  border: 1px solid #000;
  box-shadow: 2px 2px #9fe6d4;
`;

const LayerGroup = styled.div`
  padding-top: 2px;
  background: #000;
`;

const LayerRow = styled.div`
  height: 16px;
  display: flex;
  padding: 0 2px 2px 1px;
  gap: 2px;
`;

const LayerCheck = styled.input`
  appearance: none;
  flex: none;
  width: 14px;
  height: 14px;
  margin: 0;
  border: 2px solid #fff;
  outline: 0;
  background: #fff;
  box-shadow: inset 0 0 0 2px #000;
  &:checked {
    border-color: #00008f;
    box-shadow: inset 0 0 0 1px #00008f;
  }
`;

const Swatch = styled.span`
  flex: none;
  width: 14px;
  height: 14px;
  background: ${({ $color }) => $color || "#000"};
`;

const LayerName = styled.label`
  flex: 1;
  display: flex;
  align-items: center;
  justify-content: space-between;
  min-width: 0;
  height: 14px;
  padding: 0 1px 0 2px;
  background: ${({ $color }) => $color || "#9bdbdb"};
  font-weight: bold;
  line-height: 16px;
  white-space: nowrap;
`;

const SelectedCount = styled.p`
  height: 19px;
  margin: 2px 1px 2px 2px;
  padding-left: 2px;
  border: 1px solid #000;
  background: #fdc64f;
  font-weight: bold;
  line-height: 17px;
`;

const Canvas = styled.section`
  flex: 1;
  min-width: 0;
  background: #000;
  overflow: hidden;
`;

const BoardText = styled.g`
  font-family: ${MONO};
  font-weight: bold;
`;

const RightPanel = styled.aside`
  width: 164px;
  display: flex;
  flex-direction: column;
  border-left: 2px solid #2f6b5c;
  border-right: 2px solid #b5e8dc;
  background: #000;
`;

const ToolGrid = styled.div`
  display: grid;
  grid-template-columns: repeat(4, 38px);
  gap: 2px;
  padding: 1px 0 1px 1px;
  border-top: 1px solid ${({ $gray }) => ($gray ? "#777" : "#2f6b5c")};
  border-bottom: 2px solid ${({ $gray }) => ($gray ? "#3f7c72" : "#9bdbdb")};
`;

const tones = {
  teal: ["#9bdbdb", "#cdf1f1", "#5f8a8c"],
  alert: ["#9bdbdb", "#c31c1c", "#a01414"],
  gray: ["#cfcfcf", "#efefef", "#7d7d7d"],
  white: ["#ffffff", "#ffffff", "#9a9a9a"],
  orange: ["#fdc64f", "#ffe6a8", "#a87a1c"],
  pressed: ["#000000", "#c98f20", "#ffe6a8"],
};

const ToolButton = styled.button`
  width: 38px;
  height: 38px;
  background: ${({ $tone }) => tones[$tone][0]};
  box-shadow: inset 3px 3px ${({ $tone }) => tones[$tone][1]},
    inset -3px -3px ${({ $tone }) => tones[$tone][2]};
`;

const OverviewBox = styled.div`
  flex: 1;
`;

const Coordinates = styled.div`
  height: 45px;
  display: flex;
  flex-direction: column;
  padding: 7px 3px;
  border-top: 2px solid #b5e8dc;
  border-bottom: 2px solid #b5e8dc;
  background: #53cdb0;
  font-size: 15px;
  font-weight: bold;
  line-height: 15px;
`;

const StatusBar = styled.footer`
  height: 35px;
  display: flex;
  background: #ffffcc;
  border-top: 2px solid #000;
  border-bottom: 2px solid #000;
  font-weight: bold;
`;

const SnapButton = styled.button`
  display: flex;
  align-items: center;
  justify-content: center;
  width: 32px;
  background: #ffffcc;
  border: ${({ $framed }) => ($framed ? "3px solid #53cdb0" : "0 solid #000")};
  border-right-width: ${({ $framed }) => ($framed ? "3px" : "1px")};
  box-shadow: inset 2px 2px #fffff0, inset -2px -2px #a8a888;
`;

const CoordLabel = styled.label`
  width: 48px;
  padding-left: 3px;
  line-height: 33px;
`;

const CoordInput = styled.input`
  width: 170px;
  margin: 1px 3px 1px 0;
  padding: 0 6px;
  border: 2px solid #a8a888;
  border-right-color: #d0d0a8;
  border-bottom-color: #d0d0a8;
  outline: 0;
  background: #ffffcc;
  font: inherit;
`;

const Hint = styled.p`
  flex: 1;
  padding-left: 2px;
  line-height: 33px;
`;

const UnitBox = styled.div`
  width: 81px;
  padding: 2px 3px 2px 6px;
  border-left: 2px solid #000;
  background: #53cdb0;
`;

const UnitField = styled.div`
  height: 27px;
  display: flex;
  align-items: center;
  padding: 0 7px 0 5px;
  border: 2px solid #2f8a74;
  border-top-color: #9fe6d4;
  border-left-color: #9fe6d4;
  select {
    appearance: none;
    flex: 1;
    min-width: 0;
    padding: 0;
    border: 0;
    background: none;
    font: bold 14px ${MONO};
  }
`;

const UnitKnob = styled.span`
  width: 12px;
  height: 8px;
  border: 2px solid #2f8a74;
  border-top-color: #9fe6d4;
  border-left-color: #9fe6d4;
`;

const MessageBar = styled.div`
  height: 32px;
  padding: 1px 2px;
  background: #d8ffff;
  border-top: 2px solid #6f8f8f;
  p {
    height: 27px;
    border: 1px solid #000;
    background: #b0ffff;
    box-shadow: inset 2px 2px #e0ffff, inset -2px -2px #6f9f9f;
    font-weight: bold;
    line-height: 25px;
    text-align: center;
  }
`;

const Taskbar = styled.footer`
  height: 39px;
  display: flex;
  background: linear-gradient(90deg, #1c3f6e, #0f315f 45%, #072654 70%, #14365f 85%, #0b2547);
  border-top: 1px solid #5a7a9c;
`;

const StartButton = styled.button`
  width: 60px;
  padding-left: 7px;
  background: none;
`;

const TaskList = styled.div`
  flex: 1;
  display: flex;
  gap: 4px;
`;

const TaskSlot = styled.div`
  display: flex;
  width: 58px;
`;

const TaskButton = styled.button`
  flex: 1;
  display: flex;
  align-items: center;
  justify-content: center;
  border: 1px solid #8296b0;
  border-radius: 3px;
  background: ${({ $current }) =>
    $current
      ? "linear-gradient(160deg, #f0dcf0, #b58abf 60%, #d3a9d9)"
      : "linear-gradient(160deg, #8496b0, #3a5680 45%, #1f4173 50%, #2a4b7b)"};
`;

const StackEdge = styled.span`
  width: 4px;
  border: 1px solid ${({ $current }) => ($current ? "#c48fd0" : "#6a809c")};
  border-left: 0;
  border-radius: 0 3px 3px 0;
  background: ${({ $current }) => ($current ? "#8b4f9c" : "#1f3d68")};
`;

const Tray = styled.div`
  display: flex;
  align-items: center;
  gap: 8px;
  color: #fff;
`;

const TrayClock = styled.div`
  display: flex;
  flex-direction: column;
  align-items: center;
  width: 72px;
  margin-right: 4px;
  font-family: ${SANS};
  font-size: 12px;
  line-height: 18px;
`;

const ShowDesktop = styled.button`
  width: 13px;
  border: 1px solid #7288a3;
  background: linear-gradient(160deg, #6d8098, #16304f 60%);
`;

export default App;
